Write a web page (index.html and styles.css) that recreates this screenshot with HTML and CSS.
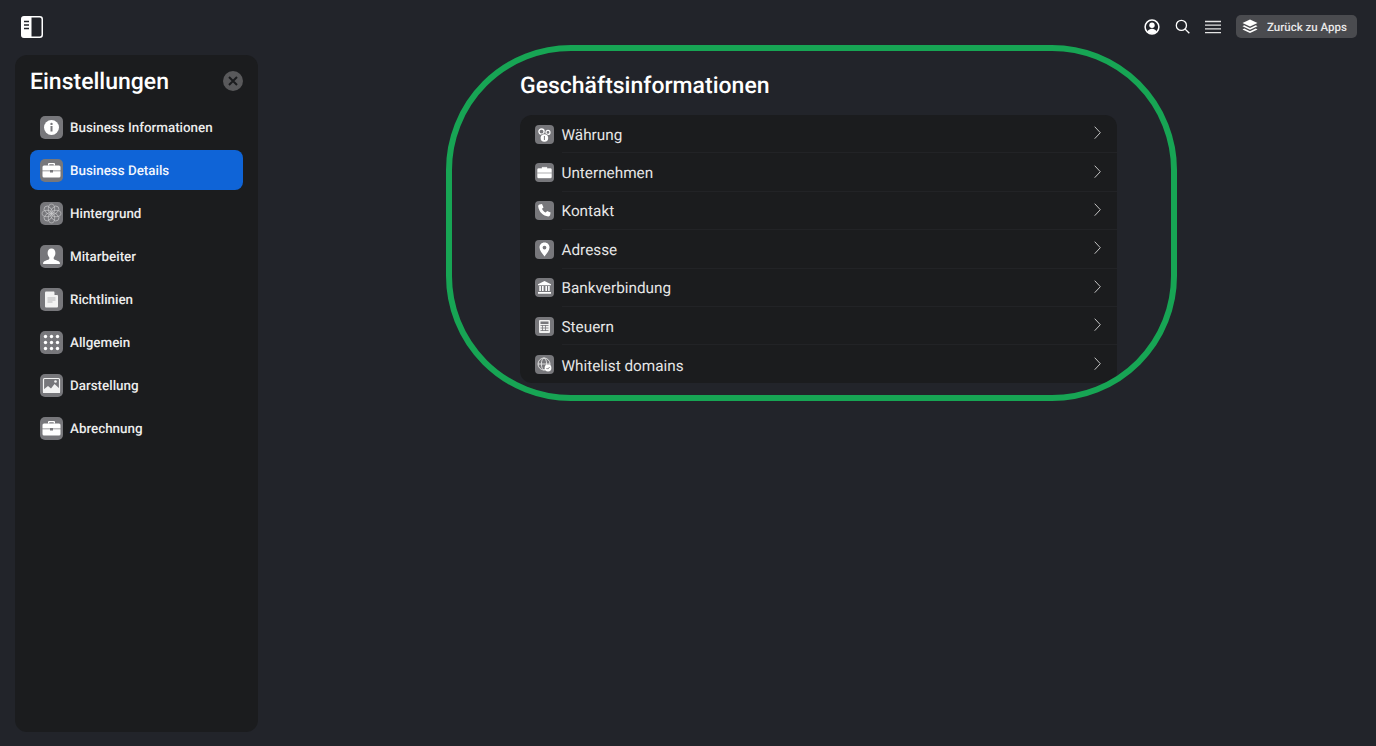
FILE: index.html
```html
<!DOCTYPE html>
<html lang="de">
<head>
<meta charset="utf-8">
<title>Einstellungen</title>
<link rel="stylesheet" href="styles.css">
</head>
<body>
<header class="topbar">
  <svg class="panel-toggle" viewBox="0 0 22 22" width="22" height="22">
    <rect x="0.75" y="0.75" width="20.5" height="20.5" rx="2.5" fill="#22242a" stroke="#fff" stroke-width="1.5"/>
    <path d="M3 0.5h7.5v21H3a2.5 2.5 0 0 1-2.500-2.500V3A2.500 2.500 0 0 1 3 .5z" fill="#fff"/>
    <path d="M3 5.500h5M3 9h5M3 12.500h5" stroke="#22242a" stroke-width="1.400"/>
  </svg>
  <div class="top-actions">
    <svg class="top-icon" viewBox="0 0 16 16" width="16" height="16">
      <circle cx="8" cy="8" r="6.900" fill="none" stroke="#fff" stroke-width="1.500"/>
      <circle cx="8" cy="6.300" r="2.700" fill="#fff"/>
      <path d="M3.400 12.600c1-2 2.700-2.800 4.600-2.800s3.600.8 4.600 2.800A6.900 6.900 0 0 1 8 14.800a6.900 6.900 0 0 1-4.600-2.200z" fill="#fff"/>
    </svg>
    <svg class="top-icon search" viewBox="0 0 16 16" width="15" height="15">
      <circle cx="6.800" cy="6.800" r="5.400" fill="none" stroke="#fff" stroke-width="1.400"/>
      <path d="M10.800 10.800l4.500 4.500" stroke="#fff" stroke-width="1.500"/>
    </svg>
    <svg class="top-icon" viewBox="0 0 16 14" width="16" height="14">
      <path d="M0 1.500h16M0 5.200h16M0 8.900h16M0 12.600h16" stroke="#e4e4e4" stroke-width="1.300"/>
    </svg>
    <button class="back-btn">
      <svg viewBox="0 0 16 15" width="16" height="15">
        <path d="M8 0.500l7.500 3.500L8 7.500.5 4z" fill="#fff"/>
        <path d="M2.200 6.300L.5 7.300 8 10.800l7.500-3.500-1.700-1L8 9z" fill="#fff"/>
        <path d="M2.200 9.600L.5 10.600 8 14.100l7.500-3.500-1.700-1L8 12.300z" fill="#fff"/>
      </svg>
      <span>Zurück zu Apps</span>
    </button>
  </div>
</header>

<div class="layout">
  <aside class="sidebar">
    <div class="side-head">
      <h1>Einstellungen</h1>
      <button class="close" aria-label="Schließen">
        <svg viewBox="0 0 20 20" width="20" height="20"><path d="M6 6l8 8M14 6l-8 8" stroke="#1b1c1e" stroke-width="2"/></svg>
      </button>
    </div>
    <nav class="side-nav">
      <a class="side-item">
        <span class="side-ico"><svg viewBox="0 0 23 23"><circle cx="11.500" cy="11.500" r="7.500" fill="#fff"/><rect x="10.500" y="10" width="2" height="5.500" fill="#77777b"/><circle cx="11.500" cy="7.900" r="1.200" fill="#77777b"/></svg></span>
        <span class="side-label">Business Informationen</span></a>
      <a class="side-item active">
        <span class="side-ico"><svg viewBox="0 0 23 23"><use href="#case"/></svg></span>
        <span class="side-label">Business Details</span></a>
      <a class="side-item">
        <span class="side-ico"><svg viewBox="0 0 23 23" fill="none" stroke="#c8c8ca" stroke-width=".7"><ellipse cx="11.500" cy="6.800" rx="3.200" ry="4.700"/><ellipse cx="11.500" cy="6.800" rx="3.200" ry="4.700" transform="rotate(45 11.500 11.500)"/><ellipse cx="11.500" cy="6.800" rx="3.200" ry="4.700" transform="rotate(90 11.500 11.500)"/><ellipse cx="11.500" cy="6.800" rx="3.200" ry="4.700" transform="rotate(135 11.500 11.500)"/><ellipse cx="11.500" cy="6.800" rx="3.200" ry="4.700" transform="rotate(180 11.500 11.500)"/><ellipse cx="11.500" cy="6.800" rx="3.200" ry="4.700" transform="rotate(225 11.500 11.500)"/><ellipse cx="11.500" cy="6.800" rx="3.200" ry="4.700" transform="rotate(270 11.500 11.500)"/><ellipse cx="11.500" cy="6.800" rx="3.200" ry="4.700" transform="rotate(315 11.500 11.500)"/></svg></span>
        <span class="side-label">Hintergrund</span></a>
      <a class="side-item">
        <span class="side-ico"><svg viewBox="0 0 23 23"><path d="M11.500 3.500c2.500 0 3.900 2 3.900 4.500 0 2-.9 3.500-1.700 4.500v1.300c0 1 3.300 1.500 5.300 2.700.6.400.9 1 .9 1.800v.7H3.100v-.7c0-.8.300-1.400.9-1.800 2-1.200 5.300-1.700 5.300-2.700v-1.300C8.500 11.500 7.600 10 7.600 8c0-2.500 1.400-4.500 3.900-4.500z" fill="#fff"/></svg></span>
        <span class="side-label">Mitarbeiter</span></a>
      <a class="side-item">
        <span class="side-ico"><svg viewBox="0 0 23 23"><path d="M6 3.500h8l4 4v11a1 1 0 0 1-1 1H6a1 1 0 0 1-1-1v-14a1 1 0 0 1 1-1z" fill="#f2f2f2"/><path d="M14.500 3.500l3.500 3.500h-3.500z" fill="#77777b"/><path d="M7.500 10h8M7.500 12h8M7.500 14h5" stroke="#b5b5b7" stroke-width="1"/></svg></span>
        <span class="side-label">Richtlinien</span></a>
      <a class="side-item">
        <span class="side-ico"><svg viewBox="0 0 23 23" fill="#fff"><circle cx="5.500" cy="5.500" r="1.700"/><circle cx="11.500" cy="5.500" r="1.700"/><circle cx="17.500" cy="5.500" r="1.700"/><circle cx="5.500" cy="11.500" r="1.700"/><circle cx="11.500" cy="11.500" r="1.700"/><circle cx="17.500" cy="11.500" r="1.700"/><circle cx="5.500" cy="17.500" r="1.700"/><circle cx="11.500" cy="17.500" r="1.700"/><circle cx="17.500" cy="17.500" r="1.700"/></svg></span>
        <span class="side-label">Allgemein</span></a>
      <a class="side-item">
        <span class="side-ico"><svg viewBox="0 0 23 23"><rect x="3.500" y="4.500" width="16" height="14" rx="1" fill="none" stroke="#f2f2f2" stroke-width="1.200"/><path d="M3 19v-3l5-4 3 2.500 3.500-4.500L20 15v4z" fill="#f2f2f2"/><circle cx="15.500" cy="7.500" r="1.300" fill="#f2f2f2"/></svg></span>
        <span class="side-label">Darstellung</span></a>
      <a class="side-item">
        <span class="side-ico"><svg viewBox="0 0 23 23"><use href="#case"/></svg></span>
        <span class="side-label">Abrechnung</span></a>
    </nav>
  </aside>

  <main class="content">
    <section class="biz">
      <h2>Geschäftsinformationen</h2>
      <ul class="rows">
        <li class="row">
          <span class="row-ico"><svg viewBox="0 0 19 19"><circle cx="6.500" cy="6.600" r="2.600" fill="#77777b" stroke="#fff" stroke-width="1.300"/><circle cx="13" cy="7.400" r="2" fill="#77777b" stroke="#fff" stroke-width="1.200"/><circle cx="9.400" cy="13" r="4.600" fill="#77777b"/><circle cx="9.400" cy="13" r="3.800" fill="#fff"/><rect x="8.900" y="11" width="1" height="4" fill="#77777b"/></svg></span>
          <span class="row-body"><span class="row-label">Währung</span>
          <svg class="chev" viewBox="0 0 7 14" width="7" height="14"><path d="M.7 .7l5.600 6-5.600 6" fill="none" stroke="#c4c4c4" stroke-width="1"/></svg></span>
        </li>
        <li class="row">
          <span class="row-ico"><svg viewBox="0 0 19 19"><path d="M7 5.500V4.300h5v1.200M2.500 6.500a1 1 0 0 1 1-1h12a1 1 0 0 1 1 1v3h-14zM2.500 10.500h14v3.500a1 1 0 0 1-1 1h-12a1 1 0 0 1-1-1z" fill="#fff" stroke="#fff" stroke-width=".4"/></svg></span>
          <span class="row-body"><span class="row-label">Unternehmen</span>
          <svg class="chev" viewBox="0 0 7 14" width="7" height="14"><path d="M.7 .7l5.600 6-5.600 6" fill="none" stroke="#c4c4c4" stroke-width="1"/></svg></span>
        </li>
        <li class="row">
          <span class="row-ico"><svg viewBox="0 0 19 19"><path d="M4.500 3.500l2.500-.5 1.500 3.500-1.500 1.300c.7 1.800 2 3.100 3.800 3.800l1.300-1.500 3.500 1.500-.5 2.500c-.2.900-1 1.400-1.900 1.300C8 14.800 4 10.800 3.200 5.400c-.1-.9.400-1.700 1.300-1.900z" fill="#fff"/></svg></span>
          <span class="row-body"><span class="row-label">Kontakt</span>
          <svg class="chev" viewBox="0 0 7 14" width="7" height="14"><path d="M.7 .7l5.600 6-5.600 6" fill="none" stroke="#c4c4c4" stroke-width="1"/></svg></span>
        </li>
        <li class="row">
          <span class="row-ico"><svg viewBox="0 0 19 19"><path fill-rule="evenodd" d="M9.500 2.500c3 0 5 2.200 5 5 0 3.300-3.300 6.500-5 9-1.700-2.500-5-5.700-5-9 0-2.800 2-5 5-5zm0 3.200a1.900 1.900 0 1 0 0 3.800 1.900 1.900 0 0 0 0-3.800z" fill="#fff"/></svg></span>
          <span class="row-body"><span class="row-label">Adresse</span>
          <svg class="chev" viewBox="0 0 7 14" width="7" height="14"><path d="M.7 .7l5.600 6-5.600 6" fill="none" stroke="#c4c4c4" stroke-width="1"/></svg></span>
        </li>
        <li class="row">
          <span class="row-ico"><svg viewBox="0 0 19 19" fill="#fff"><path d="M9.500 3l6.500 3.200v1H3v-1z"/><path d="M4.300 8h1.600v5H4.300zM7 8h1.600v5H7zM10.400 8H12v5h-1.600zM13.100 8h1.600v5h-1.600z"/><path d="M3 14h13v1.800H3z"/></svg></span>
          <span class="row-body"><span class="row-label">Bankverbindung</span>
          <svg class="chev" viewBox="0 0 7 14" width="7" height="14"><path d="M.7 .7l5.600 6-5.600 6" fill="none" stroke="#c4c4c4" stroke-width="1"/></svg></span>
        </li>
        <li class="row">
          <span class="row-ico"><svg viewBox="0 0 19 19"><rect x="4" y="3" width="11" height="13" rx="1" fill="#f0f0f0"/><rect x="5.500" y="4.500" width="8" height="2.500" fill="#77777b"/><path d="M5.500 8.500h8M5.500 11h8M5.500 13.500h8M7.500 8v6M10.500 8v6" stroke="#77777b" stroke-width=".8"/></svg></span>
          <span class="row-body"><span class="row-label">Steuern</span>
          <svg class="chev" viewBox="0 0 7 14" width="7" height="14"><path d="M.7 .7l5.600 6-5.600 6" fill="none" stroke="#c4c4c4" stroke-width="1"/></svg></span>
        </li>
        <li class="row">
          <span class="row-ico"><svg viewBox="0 0 19 19"><g fill="none" stroke="#e6e6e6" stroke-width=".9"><circle cx="9" cy="9" r="6"/><ellipse cx="9" cy="9" rx="2.600" ry="6"/><path d="M3 9h12"/></g><circle cx="13" cy="13" r="3.400" fill="#fff"/><path d="M11.500 13l1.100 1.100 2-2" fill="none" stroke="#77777b" stroke-width="1"/></svg></span>
          <span class="row-body"><span class="row-label">Whitelist domains</span>
          <svg class="chev" viewBox="0 0 7 14" width="7" height="14"><path d="M.7 .7l5.600 6-5.600 6" fill="none" stroke="#c4c4c4" stroke-width="1"/></svg></span>
        </li>
      </ul>
      <div class="ring"></div>
    </section>
  </main>
</div>

<svg class="defs" width="0" height="0">
  <symbol id="case" viewBox="0 0 23 23">
    <path d="M8 6.500V5a1 1 0 0 1 1-1h5a1 1 0 0 1 1 1v1.500h-1.300V5.300H9.300v1.200z" fill="#fff"/>
    <path d="M2.500 8a1.500 1.500 0 0 1 1.500-1.500h15A1.500 1.500 0 0 1 20.500 8v3.600h-7.500v-.7h-3v.7H2.500z" fill="#fff"/>
    <path d="M2.500 12.300h7.500v1.100h3v-1.100h7.500v4.700a1.500 1.500 0 0 1-1.500 1.500H4A1.500 1.500 0 0 1 2.500 17z" fill="#fff"/>
  </symbol>
</svg>
</body>
</html>
```
FILE: styles.css
```css
* { box-sizing: border-box; }
html, body { margin: 0; height: 100%; }
body {
  height: 746px;
  overflow: hidden;
  background: #22242a;
  color: #fff;
  font-family: Roboto, "Liberation Sans", sans-serif;
  display: flex;
  flex-direction: column;
  text-rendering: geometricPrecision;
}
.topbar {
  height: 55px;
  flex: none;
  display: flex;
  justify-content: space-between;
  align-items: flex-start;
  padding: 15px 19px 0 21px;
}
.panel-toggle { display: block; margin-top: 1px; }
.top-actions { display: flex; align-items: center; height: 23px; }
.top-icon { display: block; margin-right: 15px; flex: none; }
.back-btn {
  width: 121px;
  height: 23px;
  border: 0;
  border-radius: 5px;
  background: #4a4b4f;
  color: #e8e8e8;
  font: 500 11.5px Roboto, sans-serif;
  text-rendering: geometricPrecision;
  display: flex;
  align-items: center;
  gap: 9px;
  padding: 0 0 0 6px;
}
.layout { flex: 1; display: flex; padding: 0 0 14px 15px; min-height: 0; }
.sidebar {
  width: 243px;
  flex: none;
  background: #1b1c1e;
  border-radius: 12px;
  padding: 0 15px;
}
.side-head {
  height: 52px;
  display: flex;
  align-items: center;
  justify-content: space-between;
}
.side-head h1 { margin: 2px 0 0; font-size: 23px; font-weight: 500; line-height: 50px; }
.close {
  width: 20px;
  height: 20px;
  border: 0;
  padding: 0;
  border-radius: 50%;
  background: #59595b;
  display: block;
}
.close svg { display: block; }
.side-nav { display: flex; flex-direction: column; gap: 3px; }
.side-item {
  height: 40px;
  border-radius: 8px;
  display: flex;
  align-items: center;
  padding-left: 10px;
  gap: 7px;
  font-size: 13.4px;
  font-weight: 500;
  color: #ececec;
}
.side-label { margin-top: 2px; }
.side-item.active { background: #0f64d7; color: #f2f6fd; }
.side-ico {
  width: 23px;
  height: 23px;
  flex: none;
  background: #77777b;
  border-radius: 5px;
  display: block;
}
.side-ico svg { display: block; width: 23px; height: 23px; }
.content { flex: 1; padding-left: 262px; }
.biz { position: relative; width: 597px; }
.biz h2 {
  margin: 0;
  height: 60px;
  font-size: 23px;
  font-weight: 500;
  line-height: 61px;
}
.rows {
  list-style: none;
  margin: 0;
  padding: 0;
  height: 268px;
  background: #1b1c1e;
  border-radius: 12px;
  overflow: hidden;
}
.row {
  height: 38.4px;
  display: flex;
  align-items: center;
  padding-left: 15px;
  gap: 7.5px;
}
.row-ico {
  width: 19px;
  height: 19px;
  flex: none;
  background: #77777b;
  border-radius: 4px;
  display: block;
}
.row-ico svg { display: block; width: 19px; height: 19px; }
.row-body {
  flex: 1;
  align-self: stretch;
  display: flex;
  align-items: center;
  padding: 2px 16px 0 0;
}
.row-label {
  flex: 1;
  font-size: 15.3px;
  color: #e6e6e6;
}
.chev { flex: none; margin-top: -3px; }
.row:not(:last-child) .row-body { border-bottom: 1px solid #222326; }
.ring {
  position: absolute;
  left: -74px;
  top: -10px;
  width: 731px;
  height: 356px;
  border: 6px solid #17a554;
  border-radius: 125px;
  pointer-events: none;
}
.defs { position: absolute; }
```
